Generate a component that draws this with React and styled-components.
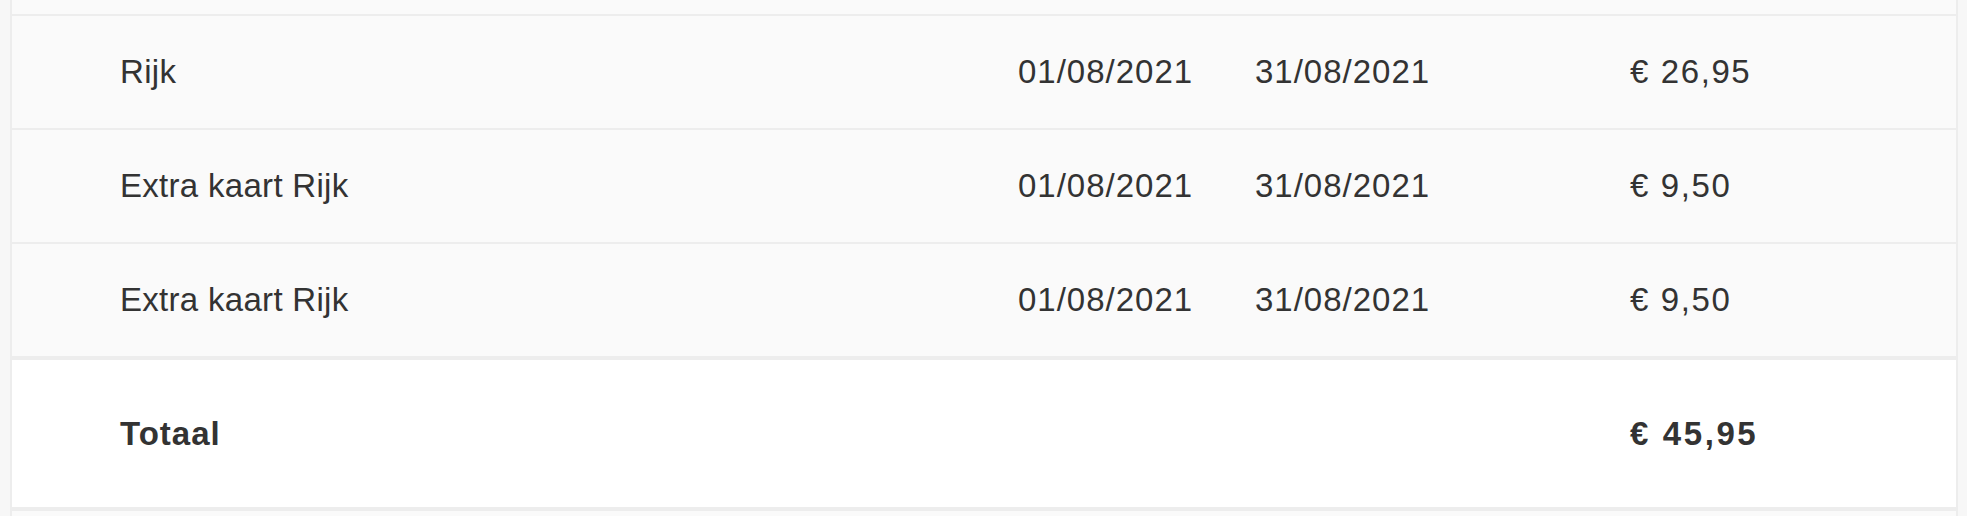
import React from 'react'
import styled, { createGlobalStyle } from 'styled-components'

const GlobalStyle = createGlobalStyle`
  body {
    margin: 0;
    background: #f7f7f7;
    font-family: "Liberation Sans", Arial, sans-serif;
    color: #333333;
  }
`

const Page = styled.div`
  width: 1967px;
  height: 516px;
  overflow: hidden;
  padding-left: 10px;
  box-sizing: border-box;
`

const Table = styled.div`
  width: 1948px;
  border-left: 2px solid #ededed;
  border-right: 2px solid #ededed;
  box-sizing: border-box;
  background: #fafafa;
`

const Spacer = styled.div`
  height: ${props => props.h}px;
  background: #fafafa;
`

const Row = styled.div`
  display: grid;
  grid-template-columns: 898px 237px 375px 1fr;
  align-items: center;
  height: 112px;
  padding-left: 108px;
  border-top: ${props => props.total ? '4px' : '2px'} solid #ededed;
  background: ${props => props.total ? '#ffffff' : '#fafafa'};
  font-size: 33px;
  font-weight: ${props => props.total ? 700 : 400};
  ${props => props.total && 'height: 147px; border-bottom: 4px solid #ededed;'}
`

const Cell = styled.div`
  white-space: nowrap;
  letter-spacing: ${props => props.spacing || '0.3px'};
`

const rows = [
  { name: 'Rijk', from: '01/08/2021', to: '31/08/2021', price: '€ 26,95' },
  { name: 'Extra kaart Rijk', from: '01/08/2021', to: '31/08/2021', price: '€ 9,50' },
  { name: 'Extra kaart Rijk', from: '01/08/2021', to: '31/08/2021', price: '€ 9,50' },
]

export default function App() {
  return (
    <>
      <GlobalStyle />
      <Page>
        <Table>
          <Spacer h={14} />
          {rows.map((r, i) => (
            <Row key={i}>
              <Cell>{r.name}</Cell>
              <Cell spacing="1px">{r.from}</Cell>
              <Cell spacing="1px">{r.to}</Cell>
              <Cell spacing="1.6px">{r.price}</Cell>
            </Row>
          ))}
          <Row total>
            <Cell spacing="1px">Totaal</Cell>
            <Cell />
            <Cell />
            <Cell spacing="2.6px">€ 45,95</Cell>
          </Row>
          <Spacer h={10} />
        </Table>
      </Page>
    </>
  )
}
